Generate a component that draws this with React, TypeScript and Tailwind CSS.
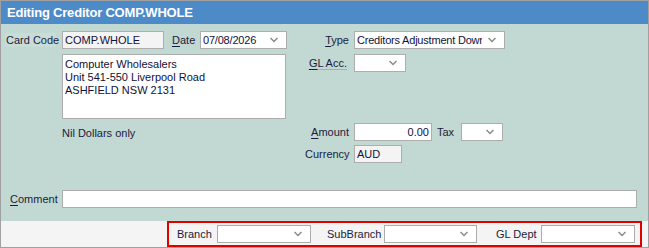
import type { ReactNode } from "react";

const FONT = { fontFamily: '"Liberation Sans", Arial, sans-serif' };

function Chevron() {
  return (
    <svg width="8" height="6" viewBox="0 0 8 6" className="shrink-0">
      <path d="M0.5 1 L4 4.5 L7.5 1" fill="none" stroke="#8a8a8a" strokeWidth="1.5" />
    </svg>
  );
}

function Dropdown({ w, value }: { w: string; value?: string }) {
  return (
    <div
      className={`flex h-[18px] items-center justify-between overflow-hidden border border-[#adadad] bg-white pl-[2px] pr-[8px] text-[#10123a] ${w}`}
    >
      <span className="mr-[6px] min-w-0 flex-1 overflow-hidden whitespace-nowrap tracking-[-0.2px]">{value}</span>
      <Chevron />
    </div>
  );
}

function Field({ w, value, grey, right }: { w: string; value?: string; grey?: boolean; right?: boolean }) {
  return (
    <div
      className={`flex h-[18px] items-center border border-[#adadad] px-[2px] text-[#10123a] ${grey ? "bg-[#f4f4f4]" : "bg-white"} ${right ? "justify-end" : ""} ${w}`}
    >
      {value}
    </div>
  );
}

function Acc({ ch, rest }: { ch: string; rest: string }) {
  return (
    <span className="whitespace-nowrap">
      <span className="underline underline-offset-[2px]">{ch}</span>
      {rest}
    </span>
  );
}

function RightRow({ label, children, className = "" }: { label: ReactNode; children: ReactNode; className?: string }) {
  return (
    <div className={`flex h-[18px] items-center ${className}`}>
      <div className="w-[49px] whitespace-nowrap pr-[5px] text-right">{label}</div>
      <div className="flex items-center">{children}</div>
    </div>
  );
}

export default function App() {
  return (
    <div
      style={FONT}
      className="flex h-[248px] w-[649px] flex-col border border-[#a0a0a0] text-[11px] leading-[13px] text-[#1c1c3c]"
    >
      <div className="flex h-[23px] shrink-0 items-center bg-[#4d8bc8] pl-[6px] text-[13px] font-bold tracking-[-0.2px] text-white">
        Editing Creditor COMP.WHOLE
      </div>

      <div className="flex h-[197px] flex-col bg-[#c2d8d2] pt-[7px]">
        <div className="flex">
          {/* left block */}
          <div className="w-[304px]">
            <div className="flex h-[18px] items-center">
              <div className="ml-[4px] w-[51px] whitespace-nowrap bg-[#c9ddd8] pl-[1px] leading-[14px]">Card Code</div>
              <div className="ml-[6px]">
                <Field w="w-[102px]" value="COMP.WHOLE" grey />
              </div>
              <div className="ml-[8px] w-[28px]">
                <Acc ch="D" rest="ate" />
              </div>
              <Dropdown w="w-[87px]" value="07/08/2026" />
            </div>
            <div className="ml-[61px] mt-[5px] h-[65px] w-[224px] border border-[#adadad] bg-white px-[2px] pt-[3px] text-[#10123a]">
              <div>Computer Wholesalers</div>
              <div>Unit 541-550 Liverpool Road</div>
              <div>ASHFIELD NSW 2131</div>
            </div>
            <div className="ml-[61px] mt-[8px]">Nil Dollars only</div>
          </div>

          {/* right block */}
          <div className="flex flex-col">
            <RightRow label={<Acc ch="T" rest="ype" />}>
              <Dropdown w="w-[151px]" value="Creditors Adjustment Down" />
            </RightRow>
            <RightRow
              className="mt-[5px]"
              label={
                <span className="mr-[2px] inline-block border-b border-[#9fb3ad] leading-[12px]">
                  <Acc ch="G" rest="L Acc." />
                </span>
              }
            >
              <Dropdown w="w-[52px]" />
            </RightRow>
            <RightRow className="mt-[51px]" label={<Acc ch="A" rest="mount" />}>
              <Field w="w-[78px]" value="0.00" right />
              <span className="ml-[5px] w-[24px]">Tax</span>
              <Dropdown w="w-[42px]" />
            </RightRow>
            <RightRow className="mt-[4px]" label="Currency">
              <Field w="w-[48px]" value="AUD" grey />
            </RightRow>
          </div>
        </div>

        <div className="mt-[27px] flex h-[18px] items-center">
          <div className="ml-[9px] w-[52px]">
            <Acc ch="C" rest="omment" />
          </div>
          <Field w="w-[575px]" />
        </div>
      </div>

      <div className="flex flex-1 bg-[#f4f4f4]">
        <div className="ml-[166px] flex h-[26px] w-[475px] items-center border-2 border-[#e00000] pl-[8px]">
          <span className="w-[40px]">Branch</span>
          <Dropdown w="w-[94px]" />
          <span className="ml-[16px] w-[57px]">SubBranch</span>
          <Dropdown w="w-[93px]" />
          <span className="ml-[19px] w-[45px]">GL Dept</span>
          <Dropdown w="w-[94px]" />
        </div>
      </div>
    </div>
  );
}
